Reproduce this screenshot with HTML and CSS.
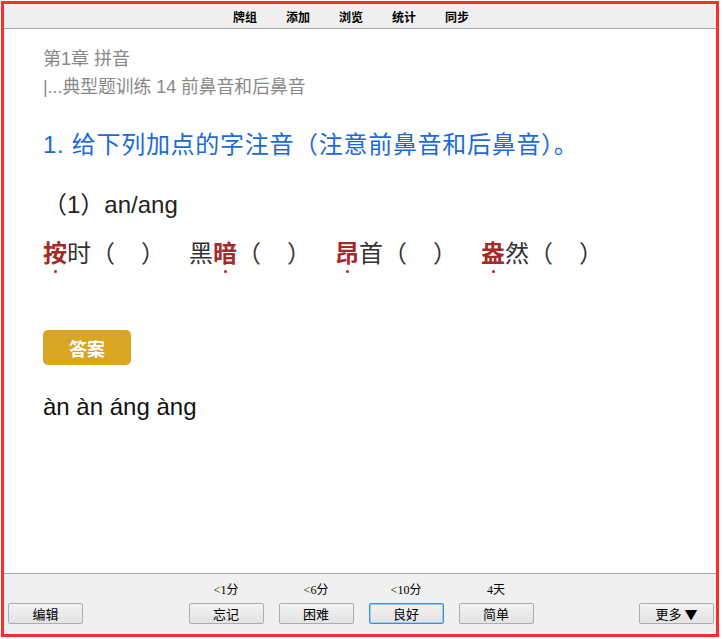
FILE: index.html
```html
<!DOCTYPE html>
<html lang="zh-CN">
<head>
    <meta charset="UTF-8">
    <meta name="viewport" content="width=device-width, initial-scale=1.0">
    <title>复习</title>
    <link rel="stylesheet" href="styles.css">
</head>
<body>

    <div class="frame">
        <nav class="toolbar">
            <span>牌组</span>
            <span>添加</span>
            <span>浏览</span>
            <span>统计</span>
            <span>同步</span>
        </nav>

        <main class="card">
            <div class="chapter">第1章 拼音</div>
            <div class="section">|...典型题训练 14 前鼻音和后鼻音</div>

            <div class="question">1. 给下列加点的字注音（注意前鼻音和后鼻音）。</div>
            <div class="sub">（1）an/ang</div>

            <div class="words">
                <span class="group"><span class="dot">按</span>时（<span class="blank"></span>）</span>
                <span class="group">黑<span class="dot">暗</span>（<span class="blank"></span>）</span>
                <span class="group"><span class="dot">昂</span>首（<span class="blank"></span>）</span>
                <span class="group"><span class="dot">盎</span>然（<span class="blank"></span>）</span>
            </div>

            <button class="answer-btn">答案</button>
            <div class="answer">àn àn áng àng</div>
        </main>

        <footer class="bottom-bar">
            <div class="side-left">
                <button class="btn">编辑</button>
            </div>
            <div class="ease">
                <div class="ease-item">
                    <span class="ease-time">&lt;1分</span>
                    <button class="btn">忘记</button>
                </div>
                <div class="ease-item">
                    <span class="ease-time">&lt;6分</span>
                    <button class="btn">困难</button>
                </div>
                <div class="ease-item">
                    <span class="ease-time">&lt;10分</span>
                    <button class="btn btn-focus">良好</button>
                </div>
                <div class="ease-item">
                    <span class="ease-time">4天</span>
                    <button class="btn">简单</button>
                </div>
            </div>
            <div class="side-right">
                <button class="btn">更多 ▼</button>
            </div>
        </footer>
    </div>

</body>
</html>
```

FILE: styles.css
```css
body {
    margin: 0;
    background-color: #fff;
    font-family: 'Liberation Sans', 'Noto Sans CJK SC', sans-serif;
}

.frame {
    margin: 1px 0 0 1px;
    width: 718px;
    height: 636px;
    box-sizing: border-box;
    border: 3px solid #ff2a2a;
    display: flex;
    flex-direction: column;
    background-color: #fff;
}

/* top menu */
.toolbar {
    height: 24px;
    background-color: #f0f0f0;
    border-bottom: 1px solid #a9a9a9;
    display: flex;
    justify-content: center;
    align-items: center;
    gap: 29px;
    padding-right: 18px;
    font-family: 'Noto Sans CJK SC', sans-serif;
    font-size: 12px;
    font-weight: bold;
    color: #000;
}

/* card area */
.card {
    flex: 1;
    padding: 16px 39px 0 39px;
    color: #333;
}

.chapter {
    font-size: 18px;
    line-height: 28px;
    color: #888;
}

.section {
    font-size: 17.8px;
    line-height: 28px;
    color: #888;
}

.question {
    margin-top: 26px;
    font-size: 24px;
    line-height: 36px;
    color: #1c6ad6;
    letter-spacing: 0.7px;
}

.sub {
    margin-top: 24px;
    font-size: 24px;
    line-height: 36px;
    color: #222;
}

.words {
    margin-top: 13px;
    display: flex;
    font-size: 24px;
    line-height: 36px;
    color: #333;
}

.group {
    width: 146px;
}

.blank {
    display: inline-block;
    width: 26px;
}

.dot {
    position: relative;
    color: #a52a2a;
    font-weight: bold;
}

.dot::after {
    content: '';
    position: absolute;
    left: 50%;
    bottom: -6px;
    width: 3px;
    height: 3px;
    margin-left: -1px;
    border-radius: 50%;
    background-color: #b22222;
}

.answer-btn {
    display: block;
    margin-top: 58px;
    width: 88px;
    height: 35px;
    border: none;
    border-radius: 5px;
    background-color: #daa520;
    color: #fff;
    font-family: 'Noto Sans CJK SC', sans-serif;
    font-size: 18px;
    font-weight: bold;
    padding: 0;
}

.answer {
    margin-top: 25px;
    font-size: 24px;
    line-height: 34px;
    color: #111;
}

/* answer buttons */
.bottom-bar {
    height: 61px;
    box-sizing: border-box;
    background-color: #f0f0f0;
    border-top: 1px solid #a9a9a9;
    display: grid;
    grid-template-columns: 1fr auto 1fr;
    align-items: end;
    padding: 0 2px 10px 4px;
}

.side-left {
    justify-self: start;
}

.side-right {
    justify-self: end;
}

.ease {
    display: flex;
    gap: 15px;
}

.ease-item {
    display: flex;
    flex-direction: column;
    align-items: center;
    gap: 6px;
}

.ease-time {
    font-family: 'Liberation Serif', 'Noto Sans CJK SC', serif;
    font-size: 12px;
    line-height: 14px;
    color: #000;
}

.btn {
    width: 75px;
    height: 21px;
    padding: 0;
    border: 1px solid #adadad;
    border-radius: 2px;
    background: linear-gradient(#f2f2f2, #e3e3e3);
    font-family: 'Noto Sans CJK SC', sans-serif;
    font-size: 13px;
    color: #000;
}

.btn-focus {
    border: 1px solid #3c8fd8;
    box-shadow: inset 0 0 0 1px #9ccaf0;
}
```
